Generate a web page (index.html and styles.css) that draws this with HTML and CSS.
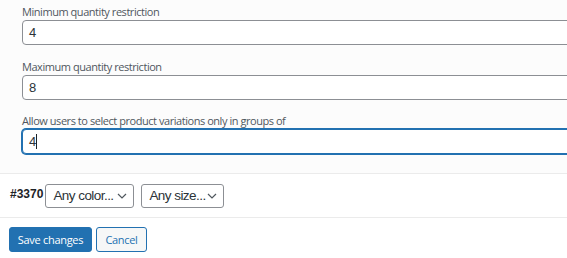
FILE: index.html
```html
<!DOCTYPE html>
<html>
<head>
<meta charset="utf-8">
<link rel="stylesheet" href="styles.css">
</head>
<body>
<div class="page">
  <div class="panel">
    <div class="field">
      <label class="field-label">Minimum quantity restriction</label>
      <div class="input">4</div>
    </div>
    <div class="field">
      <label class="field-label">Maximum quantity restriction</label>
      <div class="input">8</div>
    </div>
    <div class="field">
      <label class="field-label">Allow users to select product variations only in groups of</label>
      <div class="input focused">4<span class="caret"></span></div>
    </div>
  </div>
  <div class="variation-row">
    <span class="var-id">#3370</span>
    <div class="select color"><span class="sel-text">Any color...</span><svg class="chev" viewBox="0 0 10 6" width="10" height="6"><path d="M1 1l4 4 4-4" fill="none" stroke="#50575e" stroke-width="1.2"/></svg></div>
    <div class="select size"><span class="sel-text">Any size...</span><svg class="chev" viewBox="0 0 10 6" width="10" height="6"><path d="M1 1l4 4 4-4" fill="none" stroke="#50575e" stroke-width="1.2"/></svg></div>
  </div>
  <div class="actions">
    <button class="btn primary">Save changes</button>
    <button class="btn secondary">Cancel</button>
  </div>
</div>
</body>
</html>
```
FILE: styles.css
```css
html, body {
  margin: 0;
  padding: 0;
  background: #fff;
  overflow: hidden;
}
.page {
  width: 567px;
  height: 258px;
  overflow: hidden;
  font-family: "Open Sans", "Noto Sans", sans-serif;
}
.panel {
  background: #fcfcfc;
  padding: 4px 0 0 22px;
  height: 169px;
  border-bottom: 1px solid #ebebeb;
  box-sizing: content-box;
}
.field {
  margin-bottom: 14px;
}
.field + .field {
  margin-bottom: 13px;
}
.field-label {
  display: block;
  font-size: 11px;
  line-height: 16px;
  color: #50575e;
  letter-spacing: -0.45px;
  white-space: nowrap;
}
.input {
  box-sizing: border-box;
  width: 620px;
  height: 25px;
  border: 1px solid #8c8f94;
  border-radius: 4px;
  background: #fff;
  padding: 0 6px;
  font-family: "Liberation Sans", Arial, sans-serif;
  font-size: 13px;
  line-height: 23px;
  color: #2c3338;
  display: flex;
  align-items: center;
}
.input.focused {
  border-color: #2271b1;
  box-shadow: 0 0 0 1px #2271b1;
}
.caret {
  display: inline-block;
  width: 1px;
  height: 15px;
  background: #1d2327;
}
.variation-row {
  display: flex;
  align-items: center;
  height: 43px;
  padding-left: 10px;
  border-bottom: 1px solid #ebebeb;
  font-family: "Liberation Sans", Arial, sans-serif;
}
.var-id {
  font-weight: bold;
  font-size: 12px;
  color: #1d2327;
  margin-right: 2px;
  position: relative;
  top: -2px;
}
.select {
  box-sizing: border-box;
  height: 24px;
  border: 1px solid #8c8f94;
  border-radius: 3px;
  background: #fff;
  display: flex;
  align-items: center;
  justify-content: space-between;
  padding: 0 6px 0 7px;
  font-size: 13.5px;
  color: #2c3338;
  white-space: nowrap;
  margin-right: 7px;
}
.sel-text {
  letter-spacing: -0.55px;
}
.select.color { width: 89px; }
.select.size { width: 83px; }
.actions {
  display: flex;
  gap: 4px;
  padding: 9px 0 0 9px;
}
.btn {
  box-sizing: border-box;
  height: 25px;
  border-radius: 3px;
  font-family: "Open Sans", "Noto Sans", sans-serif;
  font-size: 11px;
  padding: 0;
  letter-spacing: -0.3px;
  white-space: nowrap;
}
.btn.primary {
  background: #2271b1;
  border: 1px solid #2271b1;
  color: #fff;
  width: 83px;
}
.btn.secondary {
  background: #f6f7f7;
  border: 1px solid #2271b1;
  color: #2271b1;
  width: 51px;
}
```
